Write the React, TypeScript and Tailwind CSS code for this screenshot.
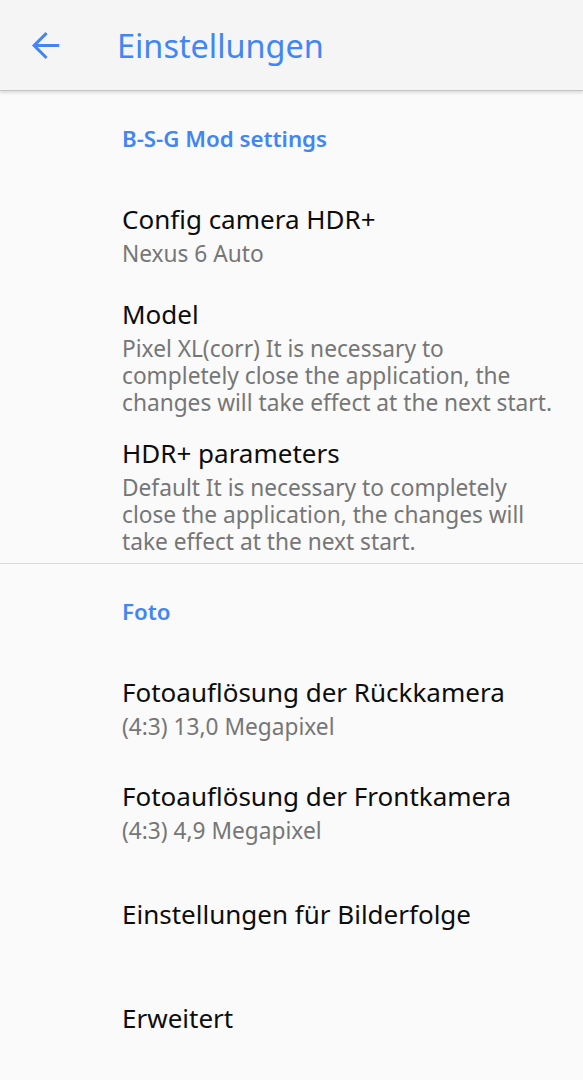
import React from "react";

const font = { fontFamily: '"Noto Sans", "Open Sans", sans-serif' };

function Category({ label }: { label: string }) {
  return (
    <div className="h-[90px] pl-[122px] pt-[32px]">
      <div className="text-[22.3px] leading-[32px] font-semibold text-[#4285f4]">{label}</div>
    </div>
  );
}

function Item({ title, summary }: { title: string; summary?: string }) {
  return (
    <div className="min-h-[104px] flex flex-col justify-center pl-[122px] pr-[28px] py-[8.5px]">
      <div className="text-[26px] leading-[41px] text-[#0d0d0d]">{title}</div>
      {summary && (
        <div className="text-[22.7px] leading-[27px] text-[#767676]">{summary}</div>
      )}
    </div>
  );
}

export default function App() {
  return (
    <div style={font} className="w-[583px] h-[1080px] overflow-hidden bg-[#fafafa]">
      <div className="relative h-[91px] bg-[#f5f5f5] flex items-center border-b border-[#c4c4c4] shadow-[0_2px_3px_rgba(0,0,0,0.12)]">
        <div className="w-[117px] pl-[26px] flex items-center">
          <svg width="39" height="39" viewBox="0 0 24 24">
            <path d="M19.5 12H5.5M12 5l-7 7 7 7" fill="none" stroke="#4285f4" strokeWidth="1.9" strokeLinecap="square" />
          </svg>
        </div>
        <div className="text-[32.4px] leading-[40px] text-[#4285f4]">Einstellungen</div>
      </div>
      <Category label="B-S-G Mod settings" />
      <Item title="Config camera HDR+" summary="Nexus 6 Auto" />
      <Item
        title="Model"
        summary="Pixel XL(corr) It is necessary to completely close the application, the changes will take effect at the next start."
      />
      <Item
        title="HDR+ parameters"
        summary="Default It is necessary to completely close the application, the changes will take effect at the next start."
      />
      <div className="h-px bg-[#d8d8d8]" />
      <Category label="Foto" />
      <Item title="Fotoauflösung der Rückkamera" summary="(4:3) 13,0 Megapixel" />
      <Item title="Fotoauflösung der Frontkamera" summary="(4:3) 4,9 Megapixel" />
      <Item title="Einstellungen für Bilderfolge" />
      <Item title="Erweitert" />
    </div>
  );
}
